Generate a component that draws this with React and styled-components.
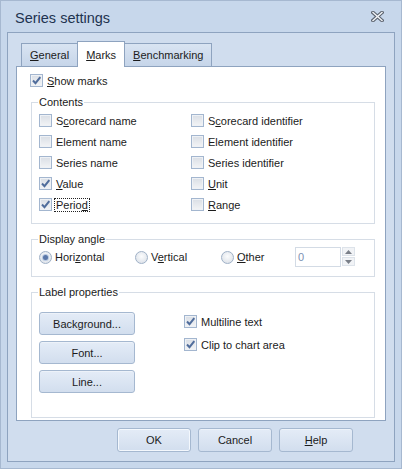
import React from "react";
import styled, { createGlobalStyle } from "styled-components";

const GlobalStyle = createGlobalStyle`
  html, body { margin: 0; padding: 0; background: #c7d7eb; }
  body { font-family: "Liberation Sans", Arial, sans-serif; font-size: 11px; color: #1b1b1b; }
`;

const Window = styled.div`
  width: 402px;
  height: 469px;
  box-sizing: border-box;
  border: 1px solid #a6b8d0;
  background: #c7d7eb;
  display: flex;
  flex-direction: column;
`;

const TitleBar = styled.div`
  height: 31px;
  display: flex;
  align-items: center;
  justify-content: space-between;
  padding: 0 17px 0 14px;
`;

const Title = styled.div`
  font-size: 14.5px;
  color: #1e3350;
  padding-top: 3px;
`;

const Client = styled.div`
  flex: 1;
  margin: 0 6px 6px 6px;
  border: 1px solid #8ea3bf;
  background: #d0ddee;
  display: flex;
  flex-direction: column;
  padding: 8px;
`;

const TabStrip = styled.div`
  display: flex;
  align-items: flex-end;
  height: 25px;
  padding-left: 5px;
`;

const Tab = styled.div`
  position: relative;
  box-sizing: border-box;
  height: ${(p) => (p.$active ? "26px" : "23px")};
  margin-bottom: ${(p) => (p.$active ? "-1px" : "0")};
  z-index: ${(p) => (p.$active ? 1 : 0)};
  padding: 0 8px;
  display: flex;
  align-items: center;
  border: 1px solid #8ea3bf;
  border-bottom: none;
  border-left: ${(p) => (p.$first || p.$active ? "1px solid #8ea3bf" : "none")};
  border-right: ${(p) => (p.$beforeActive ? "none" : "1px solid #8ea3bf")};
  background: ${(p) =>
    p.$active ? "#ffffff" : "linear-gradient(#d9e4f2, #c6d5e9)"};
  color: #1b1b1b;
`;

const Panel = styled.div`
  box-sizing: border-box;
  height: 355px;
  border: 1px solid #8ea3bf;
  background: #ffffff;
  padding: 7px 10px 0 13px;
  display: flex;
  flex-direction: column;
`;

const CheckRow = styled.label`
  display: flex;
  align-items: center;
  gap: 3px;
  height: 13px;
  white-space: nowrap;
`;

const Box = styled.span`
  width: 13px;
  height: 13px;
  box-sizing: border-box;
  flex: none;
  border: 1px solid #a3b6cf;
  background: linear-gradient(#d9dee5, #f3f4f6);
  box-shadow: inset 0 0 0 1px #eef1f5;
  display: flex;
  align-items: center;
  justify-content: center;
`;

const Caption = styled.span`
  padding: 0 1px;
  outline: ${(p) => (p.$focused ? "1px dotted #222" : "none")};
  outline-offset: 0;
`;

const Key = styled.u`
  text-decoration-thickness: 1px;
  text-underline-offset: 1px;
`;

const Group = styled.fieldset`
  margin: ${(p) => p.$top || "0"} 0 0 1px;
  border: 1px solid #d6dde6;
  padding: ${(p) => p.$pad || "5px 7px 12px 7px"};
  min-width: 0;
`;

const Legend = styled.legend`
  padding: 0 1px;
  margin-left: -1px;
  line-height: 13px;
  color: #1b1b1b;
`;

const ContentGrid = styled.div`
  display: grid;
  grid-template-columns: 152px 1fr;
  grid-auto-rows: 13px;
  row-gap: 8px;
`;

const AngleRow = styled.div`
  display: flex;
  align-items: center;
  height: 20px;
`;

const RadioItem = styled.label`
  display: flex;
  align-items: center;
  gap: 2px;
  width: ${(p) => p.$w}px;
  white-space: nowrap;
`;

const RadioDot = styled.span`
  width: 13px;
  height: 13px;
  box-sizing: border-box;
  flex: none;
  border-radius: 50%;
  border: 1px solid #9fb1c7;
  background: radial-gradient(circle at 50% 40%, #fbfcfd, #d7dde5);
  display: flex;
  align-items: center;
  justify-content: center;
  &::after {
    content: "";
    display: ${(p) => (p.$checked ? "block" : "none")};
    width: 5px;
    height: 5px;
    border-radius: 50%;
    background: #5a77a8;
    box-shadow: 0 0 0 1px #b9c9e0;
  }
`;

const Spin = styled.div`
  display: flex;
  gap: 1px;
`;

const SpinInput = styled.div`
  width: 46px;
  height: 20px;
  box-sizing: border-box;
  border: 1px solid #d3dbe5;
  color: #7d90b4;
  padding-left: 2px;
  display: flex;
  align-items: center;
`;

const SpinButtons = styled.div`
  display: flex;
  flex-direction: column;
  gap: 1px;
`;

const SpinButton = styled.div`
  width: 13px;
  height: 9px;
  box-sizing: border-box;
  border: 1px solid #dde3ea;
  background: #f1f3f6;
  display: flex;
  align-items: center;
  justify-content: center;
`;

const LabelBody = styled.div`
  display: flex;
  gap: 49px;
`;

const ButtonStack = styled.div`
  display: flex;
  flex-direction: column;
  gap: 6px;
`;

const Button = styled.button`
  width: ${(p) => p.$w || 96}px;
  height: ${(p) => p.$h || 23}px;
  box-sizing: border-box;
  border: 1px solid #a5b8d0;
  border-radius: 3px;
  background: linear-gradient(#e4ecf7, #d2deee);
  box-shadow: ${(p) => (p.$default ? "inset 0 0 0 1px #f4f8fd" : "inset 0 1px 0 #edf2f9")};
  font-family: "Liberation Sans", Arial, sans-serif;
  font-size: 11px;
  color: #1b1b1b;
  padding: 0;
`;

const OptionStack = styled.div`
  display: flex;
  flex-direction: column;
  gap: 10px;
  padding-top: 3px;
`;

const Footer = styled.div`
  display: flex;
  justify-content: flex-end;
  gap: 7px;
  padding: 7px 33px 0 0;
`;

const Tick = () => (
  <svg width="11" height="11" viewBox="0 0 11 11">
    <path d="M2 5.5 L4.5 8.2 L9.3 2.2" fill="none" stroke="#506d9c" strokeWidth="2" />
  </svg>
);

const Check = ({ checked, children, focused }) => (
  <CheckRow>
    <Box>{checked && <Tick />}</Box>
    <Caption $focused={focused}>{children}</Caption>
  </CheckRow>
);

const Radio = ({ checked, width, children }) => (
  <RadioItem $w={width}>
    <RadioDot $checked={checked} />
    <Caption>{children}</Caption>
  </RadioItem>
);

const CloseIcon = () => (
  <svg width="13" height="11" viewBox="0 0 13 11">
    <path d="M2 1.5 L11 9.5 M11 1.5 L2 9.5" stroke="#5c6470" strokeWidth="3.6" strokeLinecap="square" />
    <path d="M2 1.5 L11 9.5 M11 1.5 L2 9.5" stroke="#f4f6f9" strokeWidth="1.4" strokeLinecap="square" />
  </svg>
);

const Arrow = ({ up }) => (
  <svg width="7" height="4" viewBox="0 0 7 4">
    <path d={up ? "M0 4 L3.5 0 L7 4 Z" : "M0 0 L3.5 4 L7 0 Z"} fill="#7a7f88" />
  </svg>
);

export default function App() {
  return (
    <>
      <GlobalStyle />
      <Window>
        <TitleBar>
          <Title>Series settings</Title>
          <CloseIcon />
        </TitleBar>
        <Client>
          <TabStrip>
            <Tab $first $beforeActive><span><Key>G</Key>eneral</span></Tab>
            <Tab $active><span><Key>M</Key>arks</span></Tab>
            <Tab><span><Key>B</Key>enchmarking</span></Tab>
          </TabStrip>
          <Panel>
            <Check checked><Key>S</Key>how marks</Check>

            <Group $top="9px">
              <Legend>Contents</Legend>
              <ContentGrid>
                <Check>S<Key>c</Key>orecard name</Check>
                <Check>S<Key>c</Key>orecard identifier</Check>
                <Check>Element name</Check>
                <Check>Element identifier</Check>
                <Check>Series name</Check>
                <Check>Series identifier</Check>
                <Check checked><Key>V</Key>alue</Check>
                <Check><Key>U</Key>nit</Check>
                <Check checked focused>Perio<Key>d</Key></Check>
                <Check><Key>R</Key>ange</Check>
              </ContentGrid>
            </Group>

            <Group $top="9px" $pad="1px 7px 9px 7px">
              <Legend>Display angle</Legend>
              <AngleRow>
                <Radio checked width={96}>Hori<Key>z</Key>ontal</Radio>
                <Radio width={86}>V<Key>e</Key>rtical</Radio>
                <Radio width={74}><Key>O</Key>ther</Radio>
                <Spin>
                  <SpinInput>0</SpinInput>
                  <SpinButtons>
                    <SpinButton><Arrow up /></SpinButton>
                    <SpinButton><Arrow /></SpinButton>
                  </SpinButtons>
                </Spin>
              </AngleRow>
            </Group>

            <Group $top="9px" $pad="13px 7px 24px 7px">
              <Legend>Label properties</Legend>
              <LabelBody>
                <ButtonStack>
                  <Button>Background...</Button>
                  <Button>Font...</Button>
                  <Button>Line...</Button>
                </ButtonStack>
                <OptionStack>
                  <Check checked>Multiline text</Check>
                  <Check checked>Clip to chart area</Check>
                </OptionStack>
              </LabelBody>
            </Group>
          </Panel>
          <Footer>
            <Button $w={74} $h={24} $default>OK</Button>
            <Button $w={74} $h={24}>Cancel</Button>
            <Button $w={74} $h={24}><Key>H</Key>elp</Button>
          </Footer>
        </Client>
      </Window>
    </>
  );
}
